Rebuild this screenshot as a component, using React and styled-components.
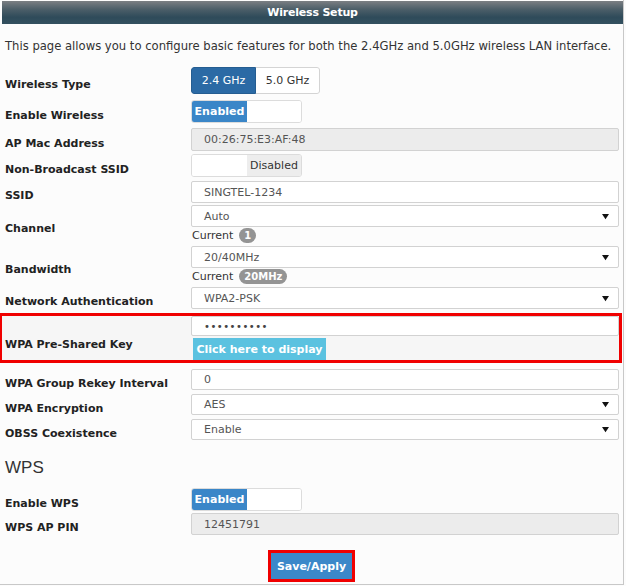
import React from "react";
import styled, { createGlobalStyle } from "styled-components";

const GlobalStyle = createGlobalStyle`
  html, body {
    margin: 0;
    padding: 0;
    background: #fcfcfc;
  }
  body {
    font-family: "DejaVu Sans", Verdana, sans-serif;
    font-size: 11px;
    color: #222;
  }
`;

const Page = styled.div`
  width: 624px;
  height: 585px;
  border-right: 1px solid #c8c8c8;
  border-bottom: 1px solid #c8c8c8;
  box-sizing: border-box;
  padding-top: 1px;
`;

const Header = styled.div`
  margin: 0 0 0 2px;
  height: 23px;
  display: flex;
  align-items: center;
  justify-content: center;
  background: linear-gradient(#7b7f83 0%, #4d5f69 35%, #2f4b5a 70%, #33505f 100%);
  color: #fff;
  font-weight: bold;
  font-size: 11px;
  letter-spacing: -0.2px;
`;

const Intro = styled.p`
  margin: 15px 0 0 5px;
  font-size: 11.6px;
  color: #333;
  line-height: 14px;
  white-space: nowrap;
`;

const Row = styled.div`
  display: grid;
  grid-template-columns: 191px 428px;
  align-items: center;
  margin-top: ${(p) => p.$mt || 0}px;
`;

const Label = styled.div`
  padding: 7px 0 0 5px;
  font-weight: bold;
  font-size: 11px;
  color: #222;
`;

const Control = styled.div`
  display: flex;
  flex-direction: column;
  align-items: flex-start;
`;

const Highlight = styled.div`
  display: grid;
  grid-template-columns: 189px 428px;
  align-items: center;
  margin-top: 4px;
  width: 622px;
  box-sizing: border-box;
  border: 3px solid #f00000;
  border-left-width: 2px;
  background: #f6f6f6;
  ${Label} {
    padding-left: 3px;
    padding-top: 12px;
  }
`;

const Segmented = styled.div`
  display: flex;
  height: 27px;
  border-radius: 3px;
  overflow: hidden;
`;

const Segment = styled.div`
  width: ${(p) => p.$w}px;
  box-sizing: border-box;
  display: flex;
  align-items: center;
  justify-content: center;
  background: ${(p) => (p.$active ? "#2b6aa5" : "#fff")};
  color: ${(p) => (p.$active ? "#fff" : "#333")};
  border: 1px solid ${(p) => (p.$active ? "#255d91" : "#d4d4d4")};
  border-left-width: ${(p) => (p.$active ? 1 : 0)}px;
  border-radius: ${(p) => (p.$active ? "3px 0 0 3px" : "0 3px 3px 0")};
  font-size: 11px;
`;

const Switch = styled.div`
  display: flex;
  width: 111px;
  height: 23px;
  box-sizing: border-box;
  border: 1px solid #dcdcdc;
  border-radius: 3px;
  overflow: hidden;
  background: #fff;
`;

const SwitchHalf = styled.div`
  width: ${(p) => p.$w}px;
  display: flex;
  align-items: center;
  justify-content: center;
  font-size: 11px;
  background: ${(p) => (p.$on ? "#3a86c8" : p.$off ? "#ededed" : "#fff")};
  color: ${(p) => (p.$on ? "#fff" : "#333")};
  font-weight: ${(p) => (p.$on ? "bold" : "normal")};
`;

const Field = styled.div`
  width: 428px;
  height: ${(p) => p.$h || 23}px;
  box-sizing: border-box;
  border: 1px solid #d2d2d2;
  border-radius: 2px;
  background: ${(p) => (p.$readonly ? "#ececec" : "#fff")};
  color: #555;
  display: flex;
  align-items: center;
  justify-content: space-between;
  padding: 0 9px 0 12px;
  font-size: 11px;
`;

const Arrow = styled.svg`
  width: 7px;
  height: 7px;
  fill: #111;
`;

const Current = styled.div`
  display: flex;
  align-items: center;
  gap: 6px;
  height: 17px;
  padding-left: 1px;
  color: #333;
  font-size: 11px;
`;

const Badge = styled.span`
  min-width: 16px;
  height: 15px;
  box-sizing: border-box;
  padding: 0 5px;
  border-radius: 8px;
  background: #949494;
  color: #fff;
  font-weight: bold;
  font-size: 10px;
  display: inline-flex;
  align-items: center;
  justify-content: center;
`;

const Dots = styled.span`
  letter-spacing: 0.5px;
  color: #444;
  font-size: 10px;
`;

const InfoButton = styled.div`
  margin: 2px 0 0 2px;
  width: 133px;
  height: 22px;
  background: #5bc2e0;
  color: #fff;
  font-weight: bold;
  font-size: 11px;
  display: flex;
  align-items: center;
  justify-content: center;
`;

const SectionTitle = styled.h3`
  margin: 18px 0 0 5px;
  font-family: "Liberation Sans", Arial, sans-serif;
  font-weight: normal;
  font-size: 17px;
  color: #333;
  line-height: 20px;
`;

const ActionBar = styled.div`
  display: flex;
  justify-content: center;
  margin-top: 15px;
`;

const SaveFrame = styled.div`
  border: 3px solid #f00000;
  padding: 0;
`;

const SaveButton = styled.div`
  width: 81px;
  height: 26px;
  background: #3b88c9;
  color: #fff;
  font-weight: bold;
  font-size: 11px;
  display: flex;
  align-items: center;
  justify-content: center;
`;

const SelectArrow = () => (
  <Arrow viewBox="0 0 8 8">
    <path d="M0 1h8L4 7z" />
  </Arrow>
);

const Select = ({ value, h }) => (
  <Field $h={h}>
    <span>{value}</span>
    <SelectArrow />
  </Field>
);

const OnOff = ({ on }) => (
  <Switch>
    {on ? (
      <>
        <SwitchHalf $w={56} $on>
          Enabled
        </SwitchHalf>
        <SwitchHalf $w={55} />
      </>
    ) : (
      <>
        <SwitchHalf $w={56} />
        <SwitchHalf $w={55} $off>
          Disabled
        </SwitchHalf>
      </>
    )}
  </Switch>
);

export default function App() {
  return (
    <>
      <GlobalStyle />
      <Page>
        <Header>Wireless Setup</Header>
        <Intro>
          This page allows you to configure basic features for both the 2.4GHz
          and 5.0GHz wireless LAN interface.
        </Intro>

        <Row $mt={14}>
          <Label>Wireless Type</Label>
          <Control>
            <Segmented>
              <Segment $w={65} $active>
                2.4 GHz
              </Segment>
              <Segment $w={64}>5.0 GHz</Segment>
            </Segmented>
          </Control>
        </Row>

        <Row $mt={6}>
          <Label>Enable Wireless</Label>
          <Control>
            <OnOff on />
          </Control>
        </Row>

        <Row $mt={5}>
          <Label>AP Mac Address</Label>
          <Control>
            <Field $readonly>00:26:75:E3:AF:48</Field>
          </Control>
        </Row>

        <Row $mt={3}>
          <Label>Non-Broadcast SSID</Label>
          <Control>
            <OnOff />
          </Control>
        </Row>

        <Row $mt={4}>
          <Label>SSID</Label>
          <Control>
            <Field $h={22}>SINGTEL-1234</Field>
          </Control>
        </Row>

        <Row $mt={2}>
          <Label>Channel</Label>
          <Control>
            <Select value="Auto" h={22} />
            <Current>
              Current <Badge>1</Badge>
            </Current>
          </Control>
        </Row>

        <Row $mt={2}>
          <Label>Bandwidth</Label>
          <Control>
            <Select value="20/40MHz" h={22} />
            <Current>
              Current <Badge>20MHz</Badge>
            </Current>
          </Control>
        </Row>

        <Row $mt={2}>
          <Label>Network Authentication</Label>
          <Control>
            <Select value="WPA2-PSK" h={22} />
          </Control>
        </Row>

        <Highlight>
          <Label>WPA Pre-Shared Key</Label>
          <Control>
            <Field $h={20}>
              <Dots>••••••••••</Dots>
            </Field>
            <InfoButton>Click here to display</InfoButton>
          </Control>
        </Highlight>

        <Row $mt={6}>
          <Label>WPA Group Rekey Interval</Label>
          <Control>
            <Field $h={21}>0</Field>
          </Control>
        </Row>

        <Row $mt={4}>
          <Label>WPA Encryption</Label>
          <Control>
            <Select value="AES" h={21} />
          </Control>
        </Row>

        <Row $mt={4}>
          <Label>OBSS Coexistence</Label>
          <Control>
            <Select value="Enable" h={21} />
          </Control>
        </Row>

        <SectionTitle>WPS</SectionTitle>

        <Row $mt={10}>
          <Label>Enable WPS</Label>
          <Control>
            <OnOff on />
          </Control>
        </Row>

        <Row $mt={2}>
          <Label>WPS AP PIN</Label>
          <Control>
            <Field $readonly $h={22}>
              12451791
            </Field>
          </Control>
        </Row>

        <ActionBar>
          <SaveFrame>
            <SaveButton>Save/Apply</SaveButton>
          </SaveFrame>
        </ActionBar>
      </Page>
    </>
  );
}
